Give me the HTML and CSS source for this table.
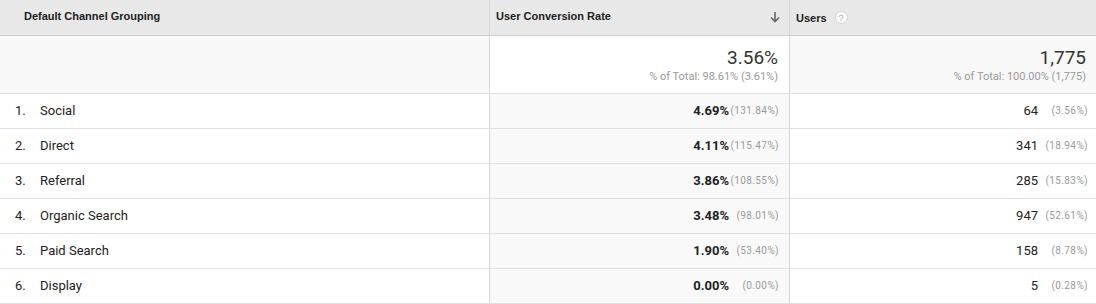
FILE: index.html
```html
<!DOCTYPE html>
<html>
<head>
<meta charset="utf-8">
<link rel="stylesheet" href="styles.css">
</head>
<body>
<div class="table">
  <div class="row head">
    <div class="cell c1"><span class="htext">Default Channel Grouping</span></div>
    <div class="cell c2 hsort"><span class="htext">User Conversion Rate</span>
      <svg class="arrow" width="12" height="12" viewBox="0 0 12 12"><path d="M6 1v9M2 6.5l4 4 4-4" fill="none" stroke="#666" stroke-width="1.6"/></svg>
    </div>
    <div class="cell c3"><span class="htext">Users</span><span class="help">?</span></div>
  </div>
  <div class="row summary">
    <div class="cell c1"></div>
    <div class="cell c2"><div class="big">3.56%</div><div class="sub">% of Total: 98.61% (3.61%)</div></div>
    <div class="cell c3"><div class="big">1,775</div><div class="sub">% of Total: 100.00% (1,775)</div></div>
  </div>
  <div class="row data">
    <div class="cell c1"><span class="idx">1.</span><span>Social</span></div>
    <div class="cell c2"><span class="val">4.69%</span><span class="pct">(131.84%)</span></div>
    <div class="cell c3"><span class="num">64</span><span class="pct">(3.56%)</span></div>
  </div>
  <div class="row data">
    <div class="cell c1"><span class="idx">2.</span><span>Direct</span></div>
    <div class="cell c2"><span class="val">4.11%</span><span class="pct">(115.47%)</span></div>
    <div class="cell c3"><span class="num">341</span><span class="pct">(18.94%)</span></div>
  </div>
  <div class="row data">
    <div class="cell c1"><span class="idx">3.</span><span>Referral</span></div>
    <div class="cell c2"><span class="val">3.86%</span><span class="pct">(108.55%)</span></div>
    <div class="cell c3"><span class="num">285</span><span class="pct">(15.83%)</span></div>
  </div>
  <div class="row data">
    <div class="cell c1"><span class="idx">4.</span><span>Organic Search</span></div>
    <div class="cell c2"><span class="val">3.48%</span><span class="pct">(98.01%)</span></div>
    <div class="cell c3"><span class="num">947</span><span class="pct">(52.61%)</span></div>
  </div>
  <div class="row data">
    <div class="cell c1"><span class="idx">5.</span><span>Paid Search</span></div>
    <div class="cell c2"><span class="val">1.90%</span><span class="pct">(53.40%)</span></div>
    <div class="cell c3"><span class="num">158</span><span class="pct">(8.78%)</span></div>
  </div>
  <div class="row data">
    <div class="cell c1"><span class="idx">6.</span><span>Display</span></div>
    <div class="cell c2"><span class="val">0.00%</span><span class="pct">(0.00%)</span></div>
    <div class="cell c3"><span class="num">5</span><span class="pct">(0.28%)</span></div>
  </div>
</div>
</body>
</html>
```
FILE: styles.css
```css
html, body {
  margin: 0;
  padding: 0;
  background: #fff;
}
body {
  font-family: Roboto, "Liberation Sans", Arial, sans-serif;
  color: #222;
  width: 1096px;
  height: 304px;
  overflow: hidden;
}
.table {
  display: flex;
  flex-direction: column;
}
.row {
  box-sizing: border-box;
  display: grid;
  grid-template-columns: 490px 300px 306px;
  border-bottom: 1px solid #e0e0e0;
}
.cell {
  box-sizing: border-box;
  display: flex;
  align-items: center;
}
.c1, .c2 {
  border-right: 1px solid #d6d6d6;
}
.head {
  height: 36px;
  background: #e8e8e8;
  border-bottom: 1px solid #cfcfcf;
}
.head .cell {
  padding-bottom: 4px;
}
.htext {
  font-family: "Liberation Sans", Arial, sans-serif;
  font-weight: bold;
  font-size: 11px;
  color: #222;
}
.head .c1 { padding-left: 24px; }
.head .c2 { padding-left: 6px; padding-right: 8px; justify-content: space-between; }
.head .c3 { padding-left: 6px; padding-bottom: 0; }
.arrow { display: block; margin-top: 2px; }
.help {
  display: inline-flex;
  align-items: center;
  justify-content: center;
  width: 13px;
  height: 13px;
  margin-left: 8px;
  border-radius: 50%;
  background: #fbfbfb;
  border: 1px solid #d4d4d4;
  box-sizing: border-box;
  color: #aaa;
  font-size: 9px;
  font-family: "Liberation Sans", Arial, sans-serif;
}
.summary {
  height: 58px;
  background: #f8f8f8;
}
.summary .c2 { background: #fff; }
.summary .c2, .summary .c3 {
  flex-direction: column;
  align-items: flex-end;
  justify-content: flex-start;
  padding-top: 11px;
}
.summary .c2 { padding-right: 11px; }
.summary .c3 { padding-right: 10px; }
.big {
  font-size: 19px;
  line-height: 22px;
  color: #333;
  font-weight: 400;
}
.sub {
  font-size: 11px;
  line-height: 13px;
  color: #999;
  margin-top: 1px;
}
.data {
  height: 35px;
  font-size: 13px;
}
.data .cell { padding-bottom: 2px; }
.data .c1 { padding-left: 15px; color: #222; }
.data .c2 { background: #f9f9f9; justify-content: flex-end; padding-right: 10px; }
.data .c3 { justify-content: flex-end; padding-right: 8px; }
.idx { width: 25px; }
.val { font-weight: 700; color: #222; }
.num { color: #222; }
.pct {
  width: 50px;
  text-align: right;
  font-size: 10px;
  color: #999;
  letter-spacing: 0.4px;
}
```
